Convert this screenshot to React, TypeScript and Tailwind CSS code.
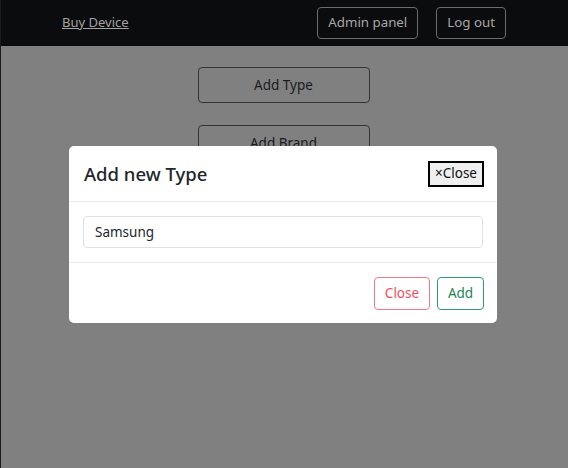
import React from "react";

export default function App() {
  const font = { fontFamily: '"Noto Sans", "Open Sans", sans-serif' };
  return (
    <div className="relative min-h-[468px] bg-[#808080] border-l border-[#1c1c1c]" style={font}>
      <nav className="h-[46px] bg-[#0b0c0e] flex items-center pl-[61px] pr-[62px]">
        <a className="text-[13px] text-[#a3a3a3] underline">Buy Device</a>
        <div className="ml-auto flex gap-[18px]">
          <button className="h-[32px] px-[10px] rounded-[4px] border border-[#6c6c6c] text-[13.3px] text-[#a8a8a8]">Admin panel</button>
          <button className="h-[32px] px-[10px] rounded-[4px] border border-[#6c6c6c] text-[13.3px] text-[#a8a8a8]">Log out</button>
        </div>
      </nav>
      <div className="flex flex-col items-center pt-[21px] gap-[22px] pr-[2px]">
        <button className="w-[172px] h-[36px] rounded-[4px] border border-[#333] text-[13.5px] text-[#1b1b22]">Add Type</button>
        <button className="w-[172px] h-[36px] rounded-[4px] border border-[#333] text-[13.5px] text-[#1b1b22]">Add Brand</button>
        <button className="w-[172px] h-[36px] rounded-[4px] border border-[#333] text-[13.5px] text-[#1b1b22]">Add Device</button>
      </div>
      <div className="absolute inset-0 flex justify-start pl-[68px] pt-[146px]">
        <div className="w-[428px] h-[177px] bg-white rounded-[5px] flex flex-col self-start">
          <div className="h-[56px] flex items-center justify-between pl-[15px] pr-[13px] border-b border-[#e9ecef]">
            <h5 className="text-[18.5px] font-medium text-[#212529]">Add new Type</h5>
            <button className="h-[26px] px-[5px] bg-[#efefef] border-2 border-black text-[13.5px] text-[#111]">×Close</button>
          </div>
          <div className="h-[61px] flex items-center px-[14px] border-b border-[#e9ecef]">
            <input
              className="w-full h-[32px] px-[11px] rounded-[4px] border border-[#dee2e6] text-[13.5px] text-[#212529] outline-none"
              defaultValue="Samsung"
              style={font}
            />
          </div>
          <div className="flex-1 flex items-center justify-end gap-[7px] px-[13px]">
            <button className="h-[33px] w-[56px] rounded-[4px] border border-[#f07a85] text-[13.5px] text-[#ef4f5d]">Close</button>
            <button className="h-[33px] w-[47px] rounded-[4px] border border-[#2f9c70] text-[13.5px] text-[#198754]">Add</button>
          </div>
        </div>
      </div>
    </div>
  );
}
